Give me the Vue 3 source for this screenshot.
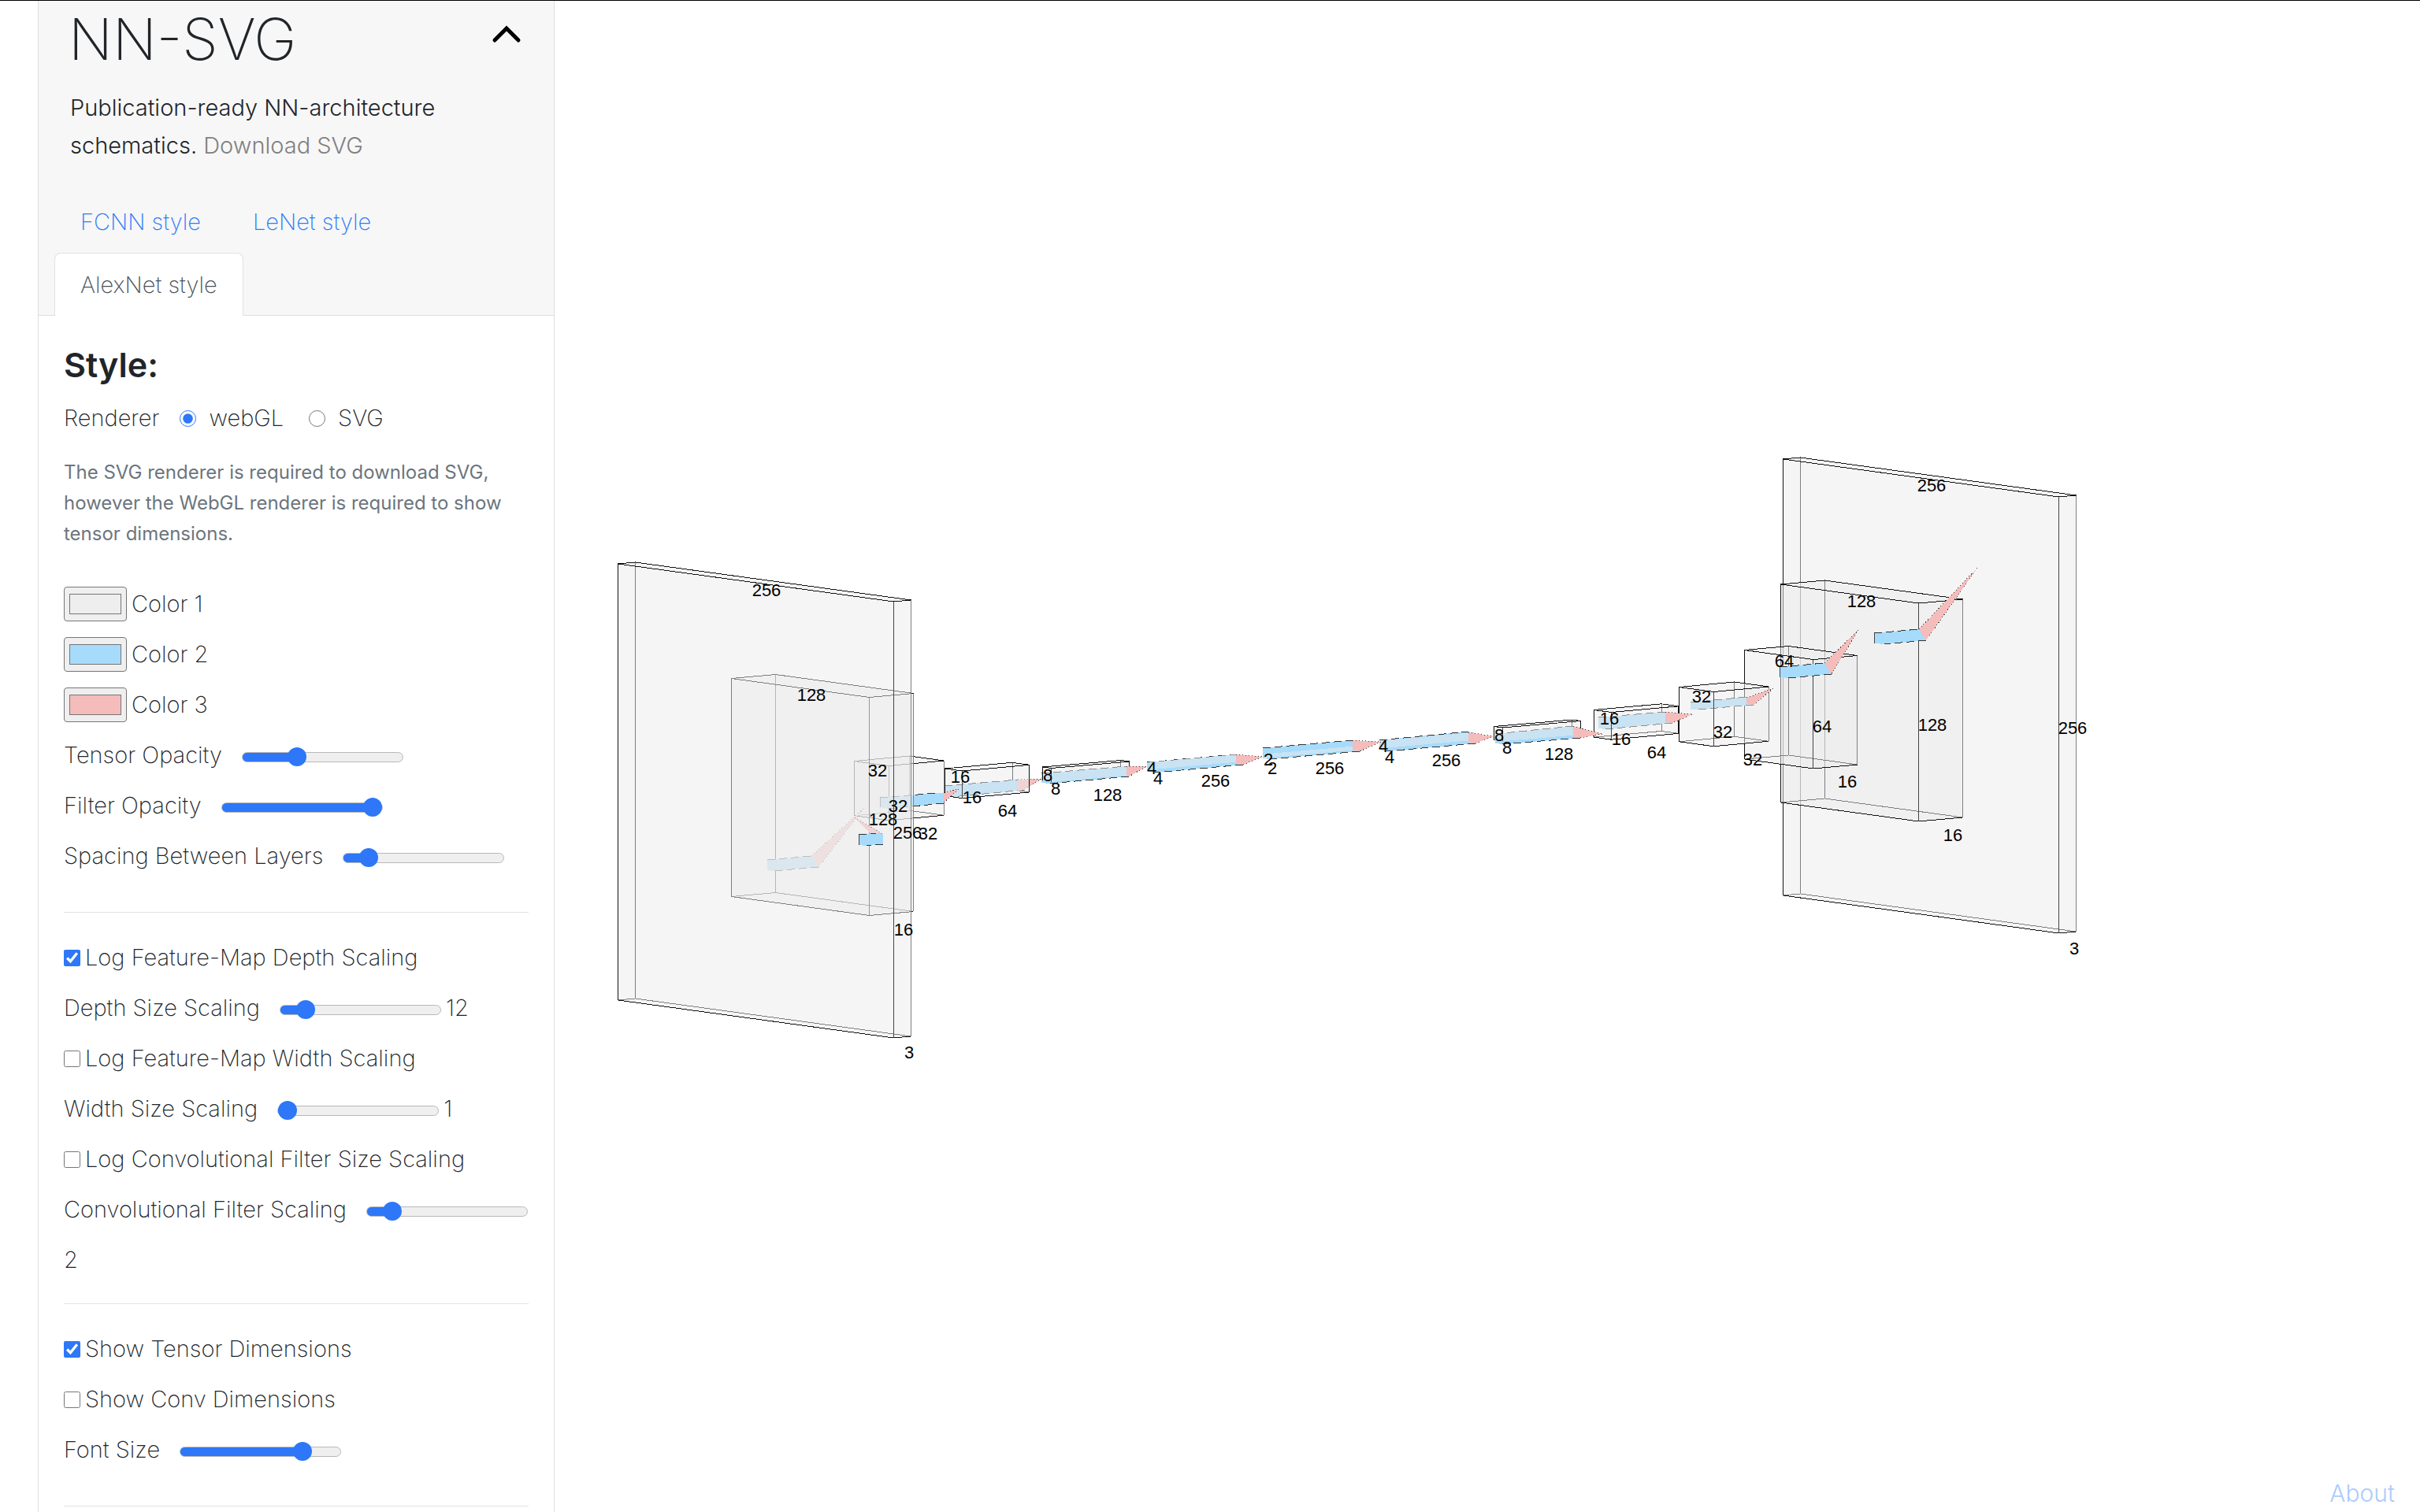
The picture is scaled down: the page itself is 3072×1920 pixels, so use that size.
<script setup>
import { ref, reactive } from 'vue'

const renderer = ref('webgl')

const colors = reactive([
  { id: 'color1', label: 'Color 1', value: '#eeeeee' },
  { id: 'color2', label: 'Color 2', value: '#a6dbfb' },
  { id: 'color3', label: 'Color 3', value: '#f5bcbc' },
])

const groups = reactive([
  [
    { id: 'tensorOpacity', type: 'range', label: 'Tensor Opacity', value: 32 },
    { id: 'filterOpacity', type: 'range', label: 'Filter Opacity', value: 100 },
    { id: 'spacing', type: 'range', label: 'Spacing Between Layers', value: 11 },
  ],
  [
    { id: 'logDepth', type: 'check', label: 'Log Feature-Map Depth Scaling', value: true },
    { id: 'depthScale', type: 'range', label: 'Depth Size Scaling', value: 11, shown: '12' },
    { id: 'logWidth', type: 'check', label: 'Log Feature-Map Width Scaling', value: false },
    { id: 'widthScale', type: 'range', label: 'Width Size Scaling', value: 0, shown: '1' },
    { id: 'logConv', type: 'check', label: 'Log Convolutional Filter Size Scaling', value: false },
    { id: 'convScale', type: 'range', label: 'Convolutional Filter Scaling', value: 11, shown: '2' },
  ],
  [
    { id: 'showDims', type: 'check', label: 'Show Tensor Dimensions', value: true },
    { id: 'showConvDims', type: 'check', label: 'Show Conv Dimensions', value: false },
    { id: 'fontSize', type: 'range', label: 'Font Size', value: 80 },
  ],
])

// Layers from back to front. at: near-left top corner, size: feature-map side, depth: extrusion vector.
const layers = [
  { at: [2263.5, 583], size: 256, depth: [22, -2] },
  { at: [2260.5, 742], size: 128, depth: [56, -5], over: true,
    blue: [[2379, 804], [2436, 799], [2445, 800], [2445, 813], [2392, 818], [2379, 817]],
    pink: [[2436, 799], [2510, 721], [2445, 813]] },
  { at: [2214.5, 825.5], size: 64, depth: [56, -5], over: true,
    blue: [[2259, 847], [2316, 842], [2325, 843], [2325, 856], [2270, 861], [2259, 860]],
    pink: [[2316, 842], [2359, 800], [2325, 856]] },
  { at: [2131.5, 872.5], size: 32, depth: [70, -6.5], pinkOver: true,
    blue: [[2146, 892], [2217, 885], [2226, 886], [2226, 895], [2155, 901], [2146, 901]],
    pink: [[2217, 886], [2251, 874], [2226, 895], [2217, 894]] },
  { at: [2023.5, 901.5], size: 16, depth: [85.5, -7.7], pinkOver: true,
    blue: [[2029, 911], [2114, 904], [2123, 905], [2123, 918], [2038, 926], [2029, 925]],
    pink: [[2114, 904], [2149, 907], [2123, 918], [2114, 917]] },
  { at: [1896.5, 922.5], size: 8, depth: [99.4, -8.5], pinkOver: true,
    blue: [[1898, 932], [1997, 922], [2006, 924], [2006, 937], [1907, 945], [1898, 944]],
    pink: [[1997, 922], [2035, 932], [2006, 937], [1997, 936]] },
  { at: [1751.5, 940.5], size: 4, depth: [114, -10], pinkOver: true,
    blue: [[1751, 940], [1864, 929], [1873, 931], [1873, 944], [1760, 954], [1751, 952]],
    pink: [[1864, 930], [1896, 935], [1873, 944], [1864, 943]] },
  { at: [1605.5, 957.5], size: 2, depth: [114, -10], pinkOver: true,
    blue: [[1603, 950], [1717, 940], [1726, 941], [1726, 954], [1612, 964], [1603, 963]],
    pink: [[1717, 940], [1753, 942], [1726, 954], [1717, 953]] },
  { at: [1459.5, 967.5], size: 4, depth: [114, -10], pinkOver: true,
    blue: [[1456, 968], [1569, 958], [1578, 959], [1578, 971], [1466, 981], [1456, 979]],
    pink: [[1569, 958], [1603, 961], [1578, 971], [1569, 970]] },
  { at: [1323.5, 974], size: 8, depth: [99.4, -8.5], pinkOver: true,
    blue: [[1322, 982], [1430, 973], [1433, 973], [1433, 986], [1331, 995], [1322, 994]],
    pink: [[1430, 973], [1456, 973], [1433, 986], [1430, 985]] },
  { at: [1199.5, 976], size: 16, depth: [85.5, -7.7],
    blue: [[1199, 998], [1292, 990], [1301, 991], [1301, 1003], [1208, 1012], [1199, 1010]],
    pink: [[1292, 990], [1323, 989], [1301, 1002], [1292, 1005]] },
  { at: [1084.5, 966.5], size: 32, depth: [70, -6.5], over: true,
    blue: [[1117, 1013], [1189, 1007], [1198, 1007], [1198, 1020], [1127, 1027], [1117, 1025]],
    pink: [[1198, 1007], [1217, 1002], [1198, 1019]] },
  { at: [928.5, 861.5], size: 128, depth: [56, -5],
    blue: [[974, 1092], [1030, 1087], [1039, 1088], [1039, 1101], [982, 1106], [974, 1105]],
    pink: [[1030, 1087], [1097, 1026], [1039, 1101]] },
  { at: [784.5, 716], size: 256, depth: [22, -2], over: true, pinkUnder: true,
    blue: [[1090, 1060], [1112, 1058], [1121, 1059], [1121, 1072], [1100, 1074], [1090, 1073]],
    pink: [[1085, 1038], [1121, 1059], [1104, 1058]] },
]

const pts = (list) => list.map((p) => p.join(',')).join(' ')

const boxes = layers.map((l) => {
  const [x, y] = l.at
  const w = [l.size * 1.367, l.size * 0.1875]
  const h = l.size * 2.164
  const d = l.depth
  const a = [x, y]
  const b = [x + d[0], y + d[1]]
  const c = [x + w[0], y + w[1]]
  const e = [c[0] + d[0], c[1] + d[1]]
  const low = (p) => [p[0], p[1] + h]
  return {
    hull: pts([a, b, e, low(e), low(c), low(a)]),
    hidden: pts([low(a), low(b), low(e)]),
    hiddenEdge: pts([b, low(b)]),
    top: pts([a, b, e, c, a]),
    left: l.size === 8 ? pts([a, low(a)]) : pts([a, low(a), low(c), low(e)]),
    near: pts([c, low(c)]),
    right: pts([e, low(e)]),
    blue: l.blue && pts(l.blue),
    blueTop: l.blue && pts(l.blue.slice(0, 2)),
    blueBottom: l.blue && pts(l.blue.slice(3, 5)),
    blueLeft: l.blue && pts([l.blue[0], l.blue[5]]),
    pink: l.pink && pts(l.pink),
    pinkLine: l.pink && pts(l.pink.slice(0, 3)),
    blueOver: l.over,
    pinkOver: (l.over || l.pinkOver) && !l.pinkUnder,
    solid: l.size < 32,
    thin: l.size < 8,
  }
})

const labels = [
  [973, 757, '256'], [1030, 890, '128'], [1114, 986, '32'], [1140, 1031, '32'], [1121, 1048, '128'],
  [1152, 1065, '256'], [1178, 1066, '32'], [1147, 1188, '16'], [1154, 1344, '3'],
  [1219, 994, '16'], [1234, 1020, '16'], [1279, 1037, '64'], [1330, 992, '8'], [1340, 1009, '8'], [1406, 1017, '128'],
  [1462, 983, '4'], [1470, 996, '4'], [1543, 999, '256'], [1610, 972, '2'], [1615, 983, '2'], [1688, 983, '256'],
  [1756, 955, '4'], [1764, 969, '4'], [1836, 973, '256'],
  [1903, 941, '8'], [1913, 957, '8'], [1979, 965, '128'], [2043, 920, '16'], [2058, 946, '16'], [2103, 963, '64'],
  [2160, 892, '32'], [2187, 937, '32'], [2225, 972, '32'], [2265, 847, '64'], [2313, 930, '64'], [2345, 1000, '16'],
  [2363, 771, '128'], [2453, 928, '128'], [2479, 1068, '16'], [2452, 624, '256'], [2631, 932, '256'], [2633, 1212, '3'],
]
</script>

<template>
  <div class="page">
    <aside class="card">
      <header class="card-header">
        <div class="title-row">
          <h1>NN-SVG</h1>
          <button class="collapse" type="button" aria-label="Collapse">
            <svg viewBox="0 0 40 24"><path d="M5 19 20 4 35 19" /></svg>
          </button>
        </div>
        <p class="lead">Publication-ready NN-architecture schematics. <a href="#download" class="muted">Download SVG</a></p>
        <nav class="tabs">
          <a href="#fcnn">FCNN style</a>
          <a href="#lenet">LeNet style</a>
          <a href="#alexnet" class="active">AlexNet style</a>
        </nav>
      </header>

      <div class="card-body">
        <h2>Style:</h2>
        <div class="row renderer">
          <span>Renderer</span>
          <input id="webgl" v-model="renderer" type="radio" name="renderer" value="webgl">
          <label for="webgl">webGL</label>
          <input id="svg" v-model="renderer" type="radio" name="renderer" value="svg">
          <label for="svg">SVG</label>
        </div>
        <p class="help">The SVG renderer is required to download SVG, however the WebGL renderer is required to show tensor dimensions.</p>

        <div v-for="c in colors" :key="c.id" class="row">
          <input :id="c.id" v-model="c.value" type="color">
          <label :for="c.id">{{ c.label }}</label>
        </div>

        <template v-for="(group, i) in groups" :key="i">
          <div class="group" :class="{ wrapped: i === 1 }">
            <div v-for="f in group" :key="f.id" class="row">
              <template v-if="f.type === 'check'">
                <input :id="f.id" v-model="f.value" type="checkbox">
                <label :for="f.id">{{ f.label }}</label>
              </template>
              <template v-else>
                <label :for="f.id">{{ f.label }}</label>
                <input :id="f.id" v-model="f.value" type="range" min="0" max="100" :style="{ '--f': f.value / 100 }">
                <output v-if="f.shown" :for="f.id">{{ f.shown }}</output>
              </template>
            </div>
          </div>
          <hr>
        </template>
      </div>
    </aside>

    <main class="stage">
      <svg class="scene" viewBox="704 0 2368 1920" preserveAspectRatio="xMinYMin meet">
        <g v-for="(b, i) in boxes" :key="i">
          <polyline class="edge" :points="b.hidden" />
          <polyline class="edge" :points="b.hiddenEdge" />
          <g v-if="b.blue && !b.blueOver">
            <polygon class="blue" :points="b.blue" />
            <polyline class="dash" :points="b.blueTop" />
            <polyline class="dash" :points="b.blueBottom" />
          </g>
          <g v-if="b.pink && !b.pinkOver">
            <polygon class="pink" :points="b.pink" />
            <polyline class="dots" :points="b.pinkLine" />
          </g>
          <polygon class="hull" :points="b.hull" />
          <template v-if="!b.thin">
            <polyline class="edge" :points="b.top" />
            <polyline class="edge" :points="b.left" />
            <polyline class="near" :points="b.near" />
            <polyline :class="b.solid ? 'edge' : 'far'" :points="b.right" />
          </template>
          <g v-if="b.blue && b.blueOver">
            <polygon class="blue" :points="b.blue" />
            <polyline class="dash" :points="b.blueTop" />
            <polyline class="dash" :points="b.blueBottom" />
            <polyline class="near" :points="b.blueLeft" />
          </g>
          <g v-if="b.pink && b.pinkOver">
            <polygon class="pink" :points="b.pink" />
            <polyline class="dots" :points="b.pinkLine" />
          </g>
        </g>
        <text v-for="(t, i) in labels" :key="'t' + i" :x="t[0]" :y="t[1]">{{ t[2] }}</text>
      </svg>
      <a href="#about" class="about">About</a>
    </main>
  </div>
</template>

<style>
body {
  margin: 0;
  background: #fff;
}
</style>

<style scoped>
.page {
  box-sizing: border-box;
  display: grid;
  grid-template-columns: minmax(680px, 11fr) 37fr;
  min-height: 100vh;
  border-top: 1px solid #000;
  color: #212529;
  font: 200 29px/48px Inter, "Liberation Sans", sans-serif;
}
a {
  color: #2f7bf6;
  text-decoration: none;
}
.card {
  margin-left: 48px;
  border: solid #dfdfdf;
  border-width: 0 1px;
}
.card-header {
  padding: 1px 20px 0;
  background: #f7f7f7;
  border-bottom: 1px solid #dfdfdf;
}
.title-row {
  display: flex;
  justify-content: space-between;
  align-items: flex-start;
  padding: 0 20px 0 18px;
}
h1 {
  margin: 0;
  font-size: 73px;
  font-weight: 200;
  line-height: 96px;
}
.collapse {
  margin-top: 30px;
  padding: 0;
  border: 0;
  background: none;
}
.collapse svg {
  display: block;
  width: 40px;
  height: 24px;
  fill: none;
  stroke: #000;
  stroke-width: 5;
  stroke-linecap: round;
}
.lead {
  margin: 15px 20px 32px;
  font-weight: 300;
}
.muted {
  color: #808080;
}
.tabs {
  display: flex;
  flex-wrap: wrap;
  margin-bottom: -1px;
}
.tabs a {
  box-sizing: border-box;
  height: 80px;
  padding: 0 32px;
  border: 1px solid transparent;
  border-bottom: 0;
  border-radius: 8px 8px 0 0;
  line-height: 80px;
}
.tabs .active {
  border-color: #dee2e6;
  background: #fff;
  color: #495057;
}
.card-body {
  padding: 34px 32px 0;
}
h2 {
  margin: 0 0 8px;
  font-size: 43px;
  font-weight: 600;
  line-height: 56px;
}
.row {
  display: flex;
  flex-wrap: wrap;
  column-gap: 6px;
  align-items: center;
  margin-right: -8px;
  line-height: 64px;
}
.help {
  margin: 17px 0 38px;
  color: #6c757d;
  font-size: 24px;
  font-weight: 400;
  line-height: 39px;
}
input {
  box-sizing: border-box;
  margin: 0;
  accent-color: #2d77f8;
}
input[type="radio"] {
  width: 21px;
  height: 21px;
  margin: 0 10px 0 20px;
}
.renderer label + input {
  margin-left: 26px;
}
input[type="checkbox"] {
  width: 21px;
  height: 21px;
}
input[type="color"] {
  width: 80px;
  height: 44px;
  padding: 0;
  border: 1px solid #767676;
  border-radius: 4px;
  background: #efefef;
}
input[type="color"]::-webkit-color-swatch-wrapper {
  padding: 8px 6px;
}
input[type="color"]::-webkit-color-swatch {
  border: 1px solid #767676;
  border-radius: 0;
}
input[type="range"] {
  appearance: none;
  width: 205px;
  height: 26px;
  margin: 4px 0 0 19px;
  background: none;
}
input[type="range"]::-webkit-slider-runnable-track {
  box-sizing: border-box;
  height: 13px;
  border: 1px solid #b8b8b8;
  border-radius: 7px;
  background: linear-gradient(#2d77f8, #2d77f8) border-box no-repeat 0 0 / calc(12px + var(--f) * 181px) 100%, #efefef;
}
input[type="range"]::-webkit-slider-thumb {
  appearance: none;
  width: 24px;
  height: 24px;
  margin-top: -7px;
  border-radius: 50%;
  background: #2d77f8;
}
.group {
  padding-bottom: 16px;
}
.group.wrapped {
  padding-bottom: 0;
}
hr {
  height: 1px;
  margin: 23px 0 25px;
  border: 0;
  background: #e3e3e3;
}
hr:last-of-type {
  margin-bottom: 0;
}
.stage {
  position: relative;
}
.scene {
  display: block;
  width: 100%;
  margin-top: -1px;
}
.scene polygon,
.scene polyline {
  shape-rendering: crispEdges;
}
.scene polyline {
  fill: none;
  stroke-width: 1;
}
.hull {
  fill: #ececec;
  fill-opacity: 0.5;
}
.blue {
  fill: #a6dbfb;
}
.pink {
  fill: #f5bcbc;
}
.edge {
  stroke: #111;
}
.near {
  stroke: #444;
}
.far {
  stroke: #808080;
}
.dash {
  stroke: #333;
  stroke-dasharray: 10 5;
}
.dots {
  stroke: #444;
  stroke-dasharray: 1 3;
}
.scene text {
  fill: #000;
  font: 400 22px "Liberation Sans", Arial, sans-serif;
  text-anchor: middle;
}
.about {
  position: absolute;
  right: 32px;
  bottom: 0;
  color: #acccfc;
  font-size: 30px;
  font-weight: 300;
}
</style>
